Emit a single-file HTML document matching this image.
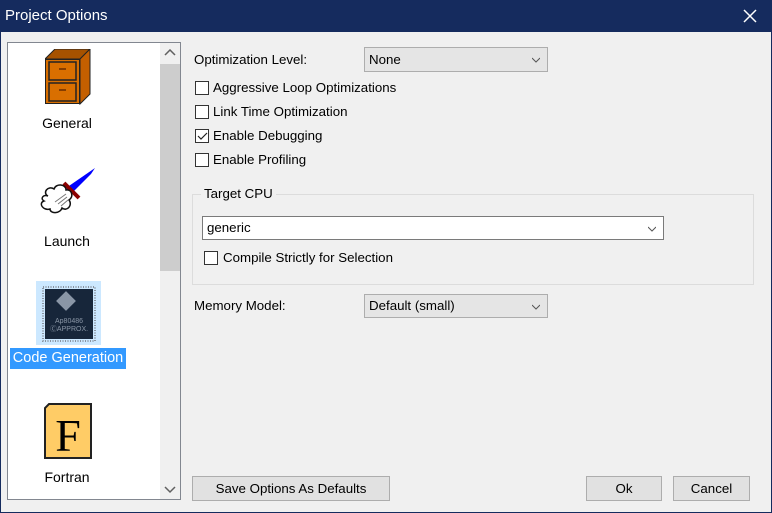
<!DOCTYPE html>
<html><head><meta charset="utf-8"><style>
*{margin:0;padding:0;box-sizing:border-box}
body{width:772px;height:513px;overflow:hidden;background:#f0f0f0;font-family:"Liberation Sans",Arial,sans-serif;font-size:13.3px;color:#000;position:relative}
.a{position:absolute}
.title{left:0;top:0;width:772px;height:32px;background:#152b5e;color:#fff;font-size:15px;line-height:32px;padding-left:5px}
.bl{left:0;top:32px;width:1px;height:481px;background:#152b5e}
.br{right:0;top:32px;width:1px;height:481px;background:#152b5e}
.bb{left:0;bottom:0;width:772px;height:1px;background:#152b5e}
.list{left:7px;top:42px;width:174px;height:458px;background:#fff;border:1px solid #828790}
.sb{left:160px;top:43px;width:20px;height:456px;background:#f0f0f0}
.thumb{left:160px;top:64px;width:20px;height:207px;background:#cdcdcd}
.lbl{width:134px;text-align:center;left:0;font-size:14px}
.cb{width:14px;height:14px;border:1px solid #333;background:#fff}
.txt{line-height:16px}
.combo{height:25px;border:1px solid #adadad;background:#e5e5e5;padding-left:4px;line-height:23px}
.btn{height:25px;border:1px solid #adadad;background:#e1e1e1;text-align:center;line-height:23px}
.chev{position:absolute;right:7px;top:8px;width:8px;height:8px}
</style></head><body>
<div class="a title">Project Options</div>
<svg class="a" style="left:743px;top:9px" width="14" height="14"><path d="M1 1L13 13M13 1L1 13" stroke="#fff" stroke-width="1.5"/></svg>
<div class="a bl"></div><div class="a br"></div><div class="a bb"></div>

<div class="a list"></div>
<div class="a sb"></div>
<div class="a thumb"></div>
<svg class="a" style="left:164px;top:49px" width="12" height="8"><path d="M1 6L6 1L11 6" stroke="#606060" stroke-width="1.5" fill="none"/></svg>
<svg class="a" style="left:164px;top:486px" width="12" height="8"><path d="M1 1L6 6L11 1" stroke="#606060" stroke-width="1.5" fill="none"/></svg>

<svg class="a" style="left:45px;top:49px" width="46" height="56">
<polygon points="0,10 10,0 45,0 35,10" fill="#a65200" stroke="#222" stroke-width="1"/>
<polygon points="35,10 45,0 45,45 35,55" fill="#c45f00" stroke="#222" stroke-width="1"/>
<rect x="0.5" y="10.5" width="34" height="44" fill="#d96f00" stroke="#222"/>
<rect x="4" y="13" width="27" height="18" fill="#d96f00" stroke="#222" stroke-width="1.5"/>
<rect x="4" y="34" width="27" height="18" fill="#d96f00" stroke="#222" stroke-width="1.5"/>
<line x1="14" y1="20" x2="21" y2="20" stroke="#6a2d00" stroke-width="1.5"/>
<line x1="14" y1="41" x2="21" y2="41" stroke="#6a2d00" stroke-width="1.5"/>
</svg>
<div class="a lbl txt" style="top:115px">General</div>

<svg class="a" style="left:38px;top:166px" width="60" height="58">
<path d="M28 22L57 2L53 8L33 28Z" fill="#0000ff"/>
<path d="M26 17L41 32" stroke="#8b0000" stroke-width="4"/>
<path d="M10 30C4 27 10 19 16 23C18 17 28 18 28 24C34 23 36 31 31 34C35 39 29 46 24 42C22 48 12 48 12 43C5 45 0 37 6 35C2 33 5 28 10 30Z" fill="#fff" stroke="#111" stroke-width="1.5"/>
<path d="M17 36L28 28M20 38L29 31M23 40L30 34" stroke="#777" stroke-width="1"/>
</svg>
<div class="a lbl txt" style="top:233px">Launch</div>

<div class="a" style="left:36px;top:281px;width:65px;height:64px;background:#cce8ff"></div>
<svg class="a" style="left:40px;top:286px" width="58" height="56">
<rect x="3" y="1" width="52" height="54" fill="none" stroke="#8a94a0" stroke-width="2" stroke-dasharray="1 1.5"/>
<rect x="5" y="3" width="48" height="50" fill="#17263a"/>
<rect x="19" y="8" width="14" height="14" transform="rotate(45 26 15)" fill="#8a96a6"/>
<text x="29" y="37" font-size="7" fill="#8a96a6" text-anchor="middle" font-family="Liberation Sans,sans-serif">Ap80486</text>
<text x="29" y="45" font-size="7" fill="#8a96a6" text-anchor="middle" font-family="Liberation Sans,sans-serif">ⒸAPPROX.</text>
</svg>
<div class="a" style="left:10px;top:348px;width:116px;height:21px;background:#3399ff"></div>
<div class="a txt" style="left:10px;top:350px;width:116px;text-align:center;color:#fff;font-size:14.5px">Code Generation</div>

<svg class="a" style="left:44px;top:403px" width="48" height="56">
<path d="M5 1H47V55H1V5Z" fill="#ffcc66" stroke="#222" stroke-width="2"/>
<text x="24" y="48" font-size="46" text-anchor="middle" font-family="Liberation Serif,serif" fill="#000">F</text>
</svg>
<div class="a lbl txt" style="top:469px">Fortran</div>

<div class="a txt" style="left:194px;top:52px">Optimization Level:</div>
<div class="a combo" style="left:364px;top:47px;width:184px">None<svg class="chev" viewBox="0 0 8 8"><path d="M0 2L4 6L8 2" stroke="#555" fill="none"/></svg></div>

<div class="a cb" style="left:195px;top:81px"></div><div class="a txt" style="left:213px;top:80px">Aggressive Loop Optimizations</div>
<div class="a cb" style="left:195px;top:105px"></div><div class="a txt" style="left:213px;top:104px">Link Time Optimization</div>
<div class="a cb" style="left:195px;top:129px"></div><svg class="a" style="left:197px;top:132px" width="11" height="9"><path d="M1 4L4 7L10 1" stroke="#222" fill="none" stroke-width="1.2"/></svg><div class="a txt" style="left:213px;top:128px">Enable Debugging</div>
<div class="a cb" style="left:195px;top:153px"></div><div class="a txt" style="left:213px;top:152px">Enable Profiling</div>

<div class="a" style="left:192px;top:194px;width:562px;height:91px;border:1px solid #dcdcdc"></div>
<div class="a txt" style="left:201px;top:186px;background:#f0f0f0;padding:0 3px">Target CPU</div>
<div class="a combo" style="left:202px;top:216px;width:462px;height:24px;background:#fff;border-color:#7a7a7a;line-height:22px">generic<svg class="chev" viewBox="0 0 8 8"><path d="M0 2L4 6L8 2" stroke="#555" fill="none"/></svg></div>
<div class="a cb" style="left:204px;top:251px"></div><div class="a txt" style="left:223px;top:250px">Compile Strictly for Selection</div>

<div class="a txt" style="left:194px;top:298px">Memory Model:</div>
<div class="a combo" style="left:364px;top:294px;width:184px;height:24px;line-height:22px">Default (small)<svg class="chev" viewBox="0 0 8 8"><path d="M0 2L4 6L8 2" stroke="#555" fill="none"/></svg></div>

<div class="a btn" style="left:192px;top:476px;width:198px">Save Options As Defaults</div>
<div class="a btn" style="left:586px;top:476px;width:76px">Ok</div>
<div class="a btn" style="left:673px;top:476px;width:77px">Cancel</div>
</body></html>
